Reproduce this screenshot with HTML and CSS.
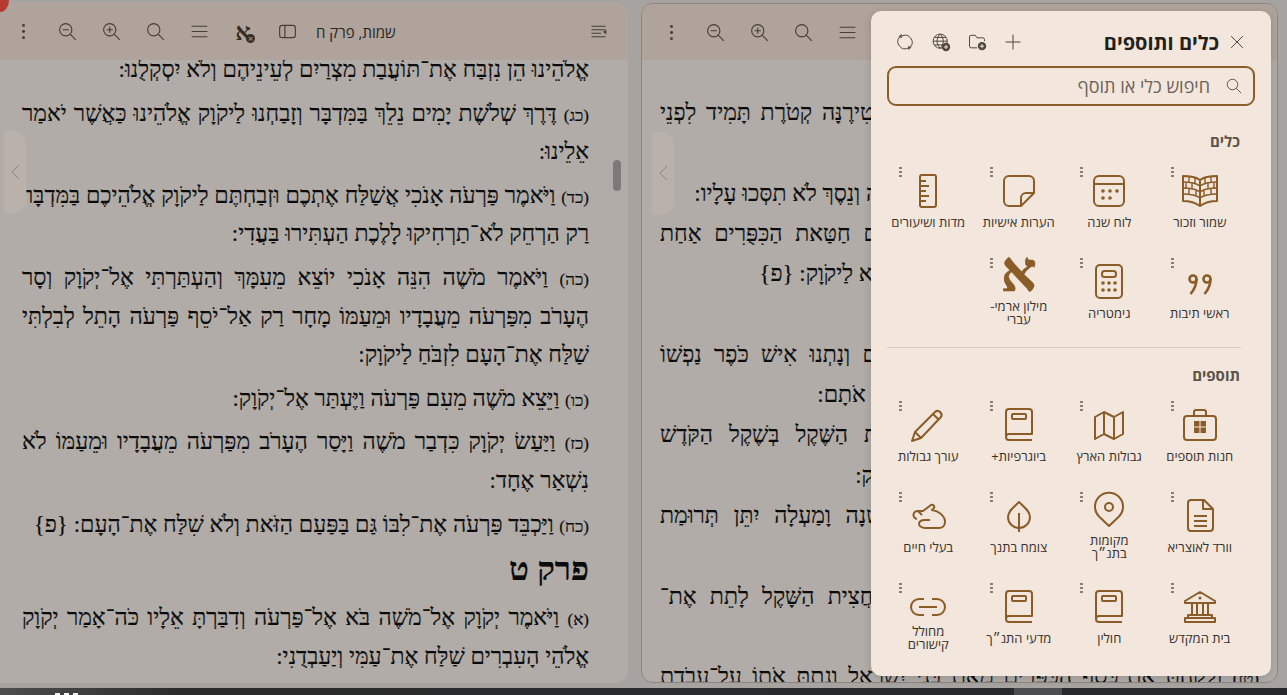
FILE: index.html
```html
<!DOCTYPE html>
<html lang="he" dir="rtl">
<head>
    <meta charset="UTF-8">
    <title>כלים ותוספים</title>
    <link rel="stylesheet" href="styles.css">
</head>
<body>
    <div class="panes">
        <section class="pane pane-framed">
            <header class="pane-head">
                <button class="head-btn"><svg class="head-icon" viewBox="0 0 24 24"><path d="M4 6h16M4 10h16M4 14h11M4 18h16"/><path class="solid" d="M21 10v5l-4-2.500z"/></svg></button>
                <div class="head-end">
                    <span class="pane-title">שמות, פרק ל</span>
                    <div class="head-tools">
                        <button class="head-btn"><svg class="head-icon" viewBox="0 0 24 24"><rect x="3" y="5" width="18" height="14" rx="3"/><path d="M9 5v14"/></svg></button>
                        <button class="head-btn"><span class="aleph-mark">א</span><span class="aleph-badge">×</span></button>
                        <button class="head-btn"><svg class="head-icon" viewBox="0 0 24 24"><path d="M3 6h18M3 12h18M3 18h18"/></svg></button>
                        <button class="head-btn"><svg class="head-icon" viewBox="0 0 24 24"><circle cx="10" cy="10" r="7"/><path d="M15 15l6.500 6.500"/></svg></button>
                        <button class="head-btn"><svg class="head-icon" viewBox="0 0 24 24"><circle cx="10" cy="10" r="7"/><path d="M15 15l6.500 6.500M6.500 10h7M10 6.500v7"/></svg></button>
                        <button class="head-btn"><svg class="head-icon" viewBox="0 0 24 24"><circle cx="10" cy="10" r="7"/><path d="M15 15l6.500 6.500M6.500 10h7"/></svg></button>
                        <button class="head-btn"><svg class="head-icon" viewBox="0 0 24 24"><circle class="solid" cx="12" cy="5" r="1.700"/><circle class="solid" cx="12" cy="12" r="1.700"/><circle class="solid" cx="12" cy="19" r="1.700"/></svg></button>
                    </div>
                </div>
            </header>
            <div class="reader reader-wide">
                <div class="row full"><small>(ח)</small> וּבְהַעֲלֹת אַהֲרֹן אֶת־הַנֵּרֹת בֵּין הָעַרְבַּיִם יַקְטִירֶנָּה קְטֹרֶת תָּמִיד לִפְנֵי</div>
                <div class="row">יְקֹוָק לְדֹרֹתֵיכֶם:</div>
                <div class="row push-l"><small>(ט)</small> לֹא־תַעֲלוּ עָלָיו קְטֹרֶת זָרָה וְעֹלָה וּמִנְחָה וְנֵסֶךְ לֹא תִסְּכוּ עָלָיו:</div>
                <div class="row full"><small>(י)</small> וְכִפֶּר אַהֲרֹן עַל־קַרְנֹתָיו אַחַת בַּשָּׁנָה מִדַּם חַטַּאת הַכִּפֻּרִים אַחַת</div>
                <div class="row push-s">בַּשָּׁנָה יְכַפֵּר עָלָיו לְדֹרֹתֵיכֶם קֹדֶשׁ־קָדָשִׁים הוּא לַיקֹוָק: {פ}</div>
                <div class="row"><small>(יא)</small> וַיְדַבֵּר יְקֹוָק אֶל־מֹשֶׁה לֵּאמֹר:</div>
                <div class="row full"><small>(יב)</small> כִּי תִשָּׂא אֶת־רֹאשׁ בְּנֵי־יִשְׂרָאֵל לִפְקֻדֵיהֶם וְנָתְנוּ אִישׁ כֹּפֶר נַפְשׁוֹ</div>
                <div class="row push-s">לַיקֹוָק בִּפְקֹד אֹתָם וְלֹא־יִהְיֶה בָהֶם נֶגֶף בִּפְקֹד אֹתָם:</div>
                <div class="row full"><small>(יג)</small> זֶה יִתְּנוּ כָּל־הָעֹבֵר עַל־הַפְּקֻדִים מַחֲצִית הַשֶּׁקֶל בְּשֶׁקֶל הַקֹּדֶשׁ</div>
                <div class="row">עֶשְׂרִים גֵּרָה הַשֶּׁקֶל מַחֲצִית הַשֶּׁקֶל תְּרוּמָה לַיקֹוָק:</div>
                <div class="row full"><small>(יד)</small> כֹּל הָעֹבֵר עַל־הַפְּקֻדִים מִבֶּן עֶשְׂרִים שָׁנָה וָמַעְלָה יִתֵּן תְּרוּמַת</div>
                <div class="row">יְקֹוָק:</div>
                <div class="row full"><small>(טו)</small> הֶעָשִׁיר לֹא־יַרְבֶּה וְהַדַּל לֹא יַמְעִיט מִמַּחֲצִית הַשָּׁקֶל לָתֵת אֶת־</div>
                <div class="row">תְּרוּמַת יְקֹוָק לְכַפֵּר עַל־נַפְשֹׁתֵיכֶם:</div>
                <div class="row full"><small>(טז)</small> וְלָקַחְתָּ אֶת־כֶּסֶף הַכִּפֻּרִים מֵאֵת בְּנֵי יִשְׂרָאֵל וְנָתַתָּ אֹתוֹ עַל־עֲבֹדַת</div>
            </div>
            <button class="edge-tab edge-tab-framed"><svg viewBox="0 0 12 20"><path d="M10 3L3 10l7 7"/></svg></button>
        </section>

        <section class="pane pane-open">
            <header class="pane-head">
                <button class="head-btn"><svg class="head-icon" viewBox="0 0 24 24"><path d="M4 6h16M4 10h16M4 14h11M4 18h16"/><path class="solid" d="M21 10v5l-4-2.500z"/></svg></button>
                <div class="head-end">
                    <span class="pane-title">שמות, פרק ח</span>
                    <div class="head-tools">
                        <button class="head-btn"><svg class="head-icon" viewBox="0 0 24 24"><rect x="3" y="5" width="18" height="14" rx="3"/><path d="M9 5v14"/></svg></button>
                        <button class="head-btn"><span class="aleph-mark">א</span><span class="aleph-badge">×</span></button>
                        <button class="head-btn"><svg class="head-icon" viewBox="0 0 24 24"><path d="M3 6h18M3 12h18M3 18h18"/></svg></button>
                        <button class="head-btn"><svg class="head-icon" viewBox="0 0 24 24"><circle cx="10" cy="10" r="7"/><path d="M15 15l6.500 6.500"/></svg></button>
                        <button class="head-btn"><svg class="head-icon" viewBox="0 0 24 24"><circle cx="10" cy="10" r="7"/><path d="M15 15l6.500 6.500M6.500 10h7M10 6.500v7"/></svg></button>
                        <button class="head-btn"><svg class="head-icon" viewBox="0 0 24 24"><circle cx="10" cy="10" r="7"/><path d="M15 15l6.500 6.500M6.500 10h7"/></svg></button>
                        <button class="head-btn"><svg class="head-icon" viewBox="0 0 24 24"><circle class="solid" cx="12" cy="5" r="1.700"/><circle class="solid" cx="12" cy="12" r="1.700"/><circle class="solid" cx="12" cy="19" r="1.700"/></svg></button>
                    </div>
                </div>
            </header>
            <div class="reader reader-narrow">
                <p><span class="row">אֱלֹהֵינוּ הֵן נִזְבַּח אֶת־תּוֹעֲבַת מִצְרַיִם לְעֵינֵיהֶם וְלֹא יִסְקְלֻנוּ:</span></p>
                <p><span class="row full"><small>(כג)</small> דֶּרֶךְ שְׁלֹשֶׁת יָמִים נֵלֵךְ בַּמִּדְבָּר וְזָבַחְנוּ לַיקֹוָק אֱלֹהֵינוּ כַּאֲשֶׁר יֹאמַר</span>
                <span class="row">אֵלֵינוּ:</span></p>
                <p><span class="row full"><small>(כד)</small> וַיֹּאמֶר פַּרְעֹה אָנֹכִי אֲשַׁלַּח אֶתְכֶם וּזְבַחְתֶּם לַיקֹוָק אֱלֹהֵיכֶם בַּמִּדְבָּר</span>
                <span class="row">רַק הַרְחֵק לֹא־תַרְחִיקוּ לָלֶכֶת הַעְתִּירוּ בַּעֲדִי:</span></p>
                <p><span class="row full"><small>(כה)</small> וַיֹּאמֶר מֹשֶׁה הִנֵּה אָנֹכִי יוֹצֵא מֵעִמָּךְ וְהַעְתַּרְתִּי אֶל־יְקֹוָק וְסָר</span>
                <span class="row full">הֶעָרֹב מִפַּרְעֹה מֵעֲבָדָיו וּמֵעַמּוֹ מָחָר רַק אַל־יֹסֵף פַּרְעֹה הָתֵל לְבִלְתִּי</span>
                <span class="row">שַׁלַּח אֶת־הָעָם לִזְבֹּחַ לַיקֹוָק:</span></p>
                <p><span class="row"><small>(כו)</small> וַיֵּצֵא מֹשֶׁה מֵעִם פַּרְעֹה וַיֶּעְתַּר אֶל־יְקֹוָק:</span></p>
                <p><span class="row full"><small>(כז)</small> וַיַּעַשׂ יְקֹוָק כִּדְבַר מֹשֶׁה וַיָּסַר הֶעָרֹב מִפַּרְעֹה מֵעֲבָדָיו וּמֵעַמּוֹ לֹא</span>
                <span class="row">נִשְׁאַר אֶחָד:</span></p>
                <p><span class="row"><small>(כח)</small> וַיַּכְבֵּד פַּרְעֹה אֶת־לִבּוֹ גַּם בַּפַּעַם הַזֹּאת וְלֹא שִׁלַּח אֶת־הָעָם: {פ}</span></p>
                <h2>פרק ט</h2>
                <p><span class="row full"><small>(א)</small> וַיֹּאמֶר יְקֹוָק אֶל־מֹשֶׁה בֹּא אֶל־פַּרְעֹה וְדִבַּרְתָּ אֵלָיו כֹּה־אָמַר יְקֹוָק</span>
                <span class="row">אֱלֹהֵי הָעִבְרִים שַׁלַּח אֶת־עַמִּי וְיַעַבְדֻנִי:</span></p>
            </div>
            <div class="scroll-thumb"></div>
            <button class="edge-tab edge-tab-open"><svg viewBox="0 0 12 20"><path d="M10 3L3 10l7 7"/></svg></button>
        </section>
    </div>

    <footer class="taskbar">
        <div class="tray"><i></i><i></i><i></i></div>
        <div class="task-active"></div>
    </footer>

    <div class="scrim"></div>
    <div class="corner-dot"></div>

    <aside class="tools-panel">
        <div class="panel-head">
            <button class="panel-btn"><svg class="panel-icon" viewBox="0 0 24 24"><path d="M5 5l14 14M19 5L5 19"/></svg></button>
            <h1>כלים ותוספים</h1>
            <div class="panel-actions">
                <button class="panel-btn"><svg class="panel-icon" viewBox="0 0 24 24"><path d="M12 3v18M3 12h18"/></svg></button>
                <button class="panel-btn"><svg class="panel-icon" viewBox="0 0 24 24"><path d="M3 17V6a2 2 0 0 1 2-2h5l2 3h7a2 2 0 0 1 2 2v2M3 17a2 2 0 0 0 2 2h7"/><circle class="solid" cx="18" cy="17" r="5"/><path class="knock" d="M18 14.500v5M15.500 17h5"/></svg></button>
                <button class="panel-btn"><svg class="panel-icon" viewBox="0 0 24 24"><circle cx="11" cy="11" r="8.500"/><path d="M2.500 11h17M11 2.500c-5 5-5 12 0 17M11 2.500c5 5 5 12 0 17M4 6.500h14M4 15.500h10"/><circle class="solid" cx="18" cy="18" r="5"/><path class="knock" d="M18 15.500v5M15.500 18h5"/></svg></button>
                <button class="panel-btn"><svg class="panel-icon" viewBox="0 0 24 24"><path d="M8 5a8.500 8.500 0 0 1 10.500 13M16 19a8.500 8.500 0 0 1-10.500-13"/><path class="solid" d="M8 2v5.500l-3.500-2zM16 22v-5.500l3.500 2z"/></svg></button>
            </div>
        </div>

        <label class="search">
            <svg class="panel-icon" viewBox="0 0 24 24"><circle cx="10" cy="10" r="7"/><path d="M15 15l6.500 6.500"/></svg>
            <input type="text" placeholder="חיפוש כלי או תוסף">
        </label>

        <h3 class="group-title">כלים</h3>
        <div class="tool-grid">
            <div class="tool"><span class="kebab"></span>
                <svg class="tool-icon" viewBox="0 0 36 36"><path d="M18 7C14 4 8 3 1 3v25c7 0 13 2 17 5 4-3 10-5 17-5V3c-7 0-13 1-17 4zM18 7v26"/><path class="thin" d="M1 9c7 0 13 1 17 4 4-3 10-4 17-4M1 15c7 0 13 1 17 4 4-3 10-4 17-4M1 21c7 0 13 1 17 4 4-3 10-4 17-4M7 3.500v6M13 4.500v6M4 10v6M10 10.500v6M7 16v6M14 17v6M29 3.500v6M23 4.500v6M32 10v6M26 10.500v6M29 16v6M22 17v6"/></svg>
                <span class="tool-name">שמור וזכור</span></div>
            <div class="tool"><span class="kebab"></span>
                <svg class="tool-icon" viewBox="0 0 36 36"><rect x="3" y="3" width="30" height="30" rx="5"/><path d="M3 11h30"/><circle class="solid" cx="12" cy="18" r="1.800"/><circle class="solid" cx="19" cy="18" r="1.800"/><circle class="solid" cx="26" cy="18" r="1.800"/><circle class="solid" cx="12" cy="25" r="1.800"/><circle class="solid" cx="19" cy="25" r="1.800"/></svg>
                <span class="tool-name">לוח שנה</span></div>
            <div class="tool"><span class="kebab"></span>
                <svg class="tool-icon" viewBox="0 0 36 36"><path d="M8 3h20a5 5 0 0 1 5 5v12L20 33H8a5 5 0 0 1-5-5V8a5 5 0 0 1 5-5z"/><path d="M33 20h-8a5 5 0 0 0-5 5v8"/></svg>
                <span class="tool-name">הערות אישיות</span></div>
            <div class="tool"><span class="kebab"></span>
                <svg class="tool-icon" viewBox="0 0 36 36"><rect x="10" y="2" width="16" height="32" rx="2"/><path d="M10 8h6M10 13h9M10 18h6M10 23h9M10 28h6"/></svg>
                <span class="tool-name">מדות ושיעורים</span></div>
            <div class="tool"><span class="kebab"></span>
                <svg class="tool-icon icon-heavy" viewBox="0 0 36 36"><circle cx="11" cy="15" r="3.500"/><circle cx="25" cy="15" r="3.500"/><path d="M14.500 15c0 6-2.500 11-6 15M28.500 15c0 6-2.500 11-6 15"/></svg>
                <span class="tool-name">ראשי תיבות</span></div>
            <div class="tool"><span class="kebab"></span>
                <svg class="tool-icon" viewBox="0 0 36 36"><rect x="5" y="1" width="26" height="33" rx="4"/><rect x="11" y="7" width="14" height="6" rx="2.500"/><circle class="solid" cx="12" cy="19" r="1.800"/><circle class="solid" cx="18" cy="19" r="1.800"/><circle class="solid" cx="24" cy="19" r="1.800"/><circle class="solid" cx="12" cy="26" r="1.800"/><circle class="solid" cx="18" cy="26" r="1.800"/><circle class="solid" cx="24" cy="26" r="1.800"/></svg>
                <span class="tool-name">גימטריה</span></div>
            <div class="tool"><span class="kebab"></span>
                <span class="tool-glyph">א</span>
                <span class="tool-name">מילון ארמי-<br>עברי</span></div>
        </div>

        <hr>

        <h3 class="group-title">תוספים</h3>
        <div class="tool-grid">
            <div class="tool"><span class="kebab"></span>
                <svg class="tool-icon" viewBox="0 0 36 36"><rect x="2" y="9" width="32" height="24" rx="3"/><path d="M12 9V5a2 2 0 0 1 2-2h8a2 2 0 0 1 2 2v4"/><path class="solid" d="M12 14h5.500v5.500H12zM18.500 14H24v5.500h-5.500zM12 20.500h5.500V26H12zM18.500 20.500H24V26h-5.500z"/></svg>
                <span class="tool-name">חנות תוספים</span></div>
            <div class="tool"><span class="kebab"></span>
                <svg class="tool-icon" viewBox="0 0 36 36"><path d="M4 10l9-5 10 5 9-5v22l-9 5-10-5-9 5zM13 5v22M23 10v22"/></svg>
                <span class="tool-name">גבולות הארץ</span></div>
            <div class="tool"><span class="kebab"></span>
                <svg class="tool-icon" viewBox="0 0 36 36"><path d="M5 30a3 3 0 0 1 3-3h23V5a3 3 0 0 0-3-3H8a3 3 0 0 0-3 3zM5 30a3 3 0 0 0 3 3h23"/><rect x="11" y="7" width="14" height="5" rx="1"/></svg>
                <span class="tool-name">ביוגרפיות+</span></div>
            <div class="tool"><span class="kebab"></span>
                <svg class="tool-icon" viewBox="0 0 36 36"><path d="M2 34l3-9L25 5a3.900 3.900 0 0 1 5.500 5.500L11 31zM5 25l6 6M23 7l5.500 5.500"/></svg>
                <span class="tool-name">עורך גבולות</span></div>
            <div class="tool"><span class="kebab"></span>
                <svg class="tool-icon" viewBox="0 0 36 36"><path d="M9 2h13l9 9v19a3 3 0 0 1-3 3H9a3 3 0 0 1-3-3V5a3 3 0 0 1 3-3z"/><path d="M21 2v9h10M12 18h13M12 23h13M12 28h13"/></svg>
                <span class="tool-name">וורד לאוצריא</span></div>
            <div class="tool"><span class="kebab"></span>
                <svg class="tool-icon icon-spill" viewBox="0 0 36 36"><path d="M18 28L8 18.500a14 14 0 1 1 20 0z"/><circle cx="18" cy="9" r="4"/></svg>
                <span class="tool-name">מקומות<br>בתנ״ך</span></div>
            <div class="tool"><span class="kebab"></span>
                <svg class="tool-icon" viewBox="0 0 36 36"><path d="M18 4c-5 5-11 9-11 15a11 11 0 0 0 22 0C29 13 23 9 18 4zM18 15v19"/></svg>
                <span class="tool-name">צומח בתנך</span></div>
            <div class="tool"><span class="kebab"></span>
                <svg class="tool-icon" viewBox="0 0 36 36"><path d="M7 21a4 4 0 1 1 1-8h5l8-6c2-1 4 1 3 3l-2 2c7 1 13 6 13 12 0 4-3 6-6 6H15c-3 0-6-2-6-4 0-3 3-4 6-4h5"/><path d="M8 13l4 4"/></svg>
                <span class="tool-name">בעלי חיים</span></div>
            <div class="tool"><span class="kebab"></span>
                <svg class="tool-icon" viewBox="0 0 36 36"><path d="M18 3l15 9v2H3v-2zM6 29v-3h24v3M3 33v-4h30v4zM10 14v12M15 14v12M21 14v12M26 14v12"/><circle class="solid" cx="18" cy="9" r="1.500"/></svg>
                <span class="tool-name">בית המקדש</span></div>
            <div class="tool"><span class="kebab"></span>
                <svg class="tool-icon" viewBox="0 0 36 36"><path d="M5 30a3 3 0 0 1 3-3h23V5a3 3 0 0 0-3-3H8a3 3 0 0 0-3 3zM5 30a3 3 0 0 0 3 3h23"/><rect x="11" y="7" width="14" height="5" rx="1"/></svg>
                <span class="tool-name">חולין</span></div>
            <div class="tool"><span class="kebab"></span>
                <svg class="tool-icon" viewBox="0 0 36 36"><path d="M5 30a3 3 0 0 1 3-3h23V5a3 3 0 0 0-3-3H8a3 3 0 0 0-3 3zM5 30a3 3 0 0 0 3 3h23"/><rect x="11" y="7" width="14" height="5" rx="1"/></svg>
                <span class="tool-name">מדעי התנ״ך</span></div>
            <div class="tool"><span class="kebab"></span>
                <svg class="tool-icon" viewBox="0 0 36 36"><path d="M14 10H9a8 8 0 0 0 0 16h5M22 10h5a8 8 0 0 1 0 16h-5M9 18h18"/></svg>
                <span class="tool-name">מחולל<br>קישורים</span></div>
        </div>
    </aside>
</body>
</html>
```

FILE: styles.css
```css
* {
    box-sizing: border-box;
}

body {
    margin: 0;
    height: 695px;
    overflow: hidden;
    background: #eeeae6;
    font-family: "Open Sans", "Liberation Sans", sans-serif;
}

button {
    border: 0;
    padding: 0;
    background: none;
    font: inherit;
    color: inherit;
}

/* reader panes */
.panes {
    display: flex;
    gap: 13px;
    height: 688px;
    padding: 3px 9px 5px 0;
}

.pane {
    position: relative;
    display: flex;
    flex-direction: column;
    overflow: hidden;
    background: #fef7f1;
}

.pane-framed {
    width: 637px;
    border: 1px solid #c9bfb6;
    border-radius: 12px;
}

.pane-open {
    width: 628px;
    border-radius: 0 12px 12px 0;
}

.pane-head {
    position: relative;
    z-index: 1;
    display: flex;
    justify-content: space-between;
    align-items: center;
    flex: none;
    height: 57px;
    padding: 0 8px 0 1px;
    background: #fbeade;
}

.pane-framed .pane-head {
    padding-left: 7px;
    height: 56px;
}

.head-end,
.head-tools {
    display: flex;
    align-items: center;
}

.head-end {
    gap: 7px;
}

.pane-title {
    font-size: 15px;
    color: #3a3632;
}

.head-btn {
    position: relative;
    display: flex;
    align-items: center;
    justify-content: center;
    width: 44px;
    height: 44px;
}

.head-icon {
    width: 21px;
    height: 21px;
    fill: none;
    stroke: #66594f;
    stroke-width: 1.300;
}

.head-icon .solid {
    fill: #66594f;
    stroke: none;
}

.aleph-mark {
    font: bold 24px/1 "Liberation Serif", serif;
    color: #4d4238;
}

.aleph-badge {
    position: absolute;
    left: 25px;
    top: 24px;
    width: 9px;
    height: 9px;
    border-radius: 50%;
    font-size: 9px;
    line-height: 9px;
    text-align: center;
    color: #fbeade;
    background: #4d4238;
}

.reader {
    font-family: "Liberation Serif", serif;
    font-size: 23px;
    color: #111;
    -webkit-text-stroke: .2px #111;
}

.reader small {
    font-size: 17px;
    line-height: 1;
}

.reader-narrow {
    margin-top: -9px;
    padding: 0 39px 0 22px;
    line-height: 38.600px;
}

.reader-narrow p {
    margin: 0 0 5px;
}

.reader-narrow h2 {
    margin: 5px 0 10px;
    font-size: 33px;
    line-height: 40px;
}

.reader-wide {
    padding: 33px 18px 0 18px;
    line-height: 40.300px;
}

.row {
    display: block;
    white-space: nowrap;
}

.row.full {
    white-space: normal;
    text-align: justify;
    text-align-last: justify;
}

/* verse endings sit further along than the browser's font would put them */
.push-s {
    padding-right: 27px;
}

.push-l {
    padding-right: 45px;
}

.scroll-thumb {
    position: absolute;
    left: 613px;
    top: 157px;
    width: 8px;
    height: 31px;
    border-radius: 4px;
    background: #b5aea9;
}

.edge-tab {
    position: absolute;
    z-index: 3;
    top: 128px;
    display: flex;
    align-items: center;
    justify-content: center;
    width: 22px;
    height: 82px;
    border-radius: 0 14px 14px 0;
    background: #bab1aa;
    box-shadow: 0 0 3px #bab1aa;
}

.edge-tab-open {
    left: 4px;
}

.edge-tab-framed {
    left: 10px;
}

.edge-tab svg {
    width: 12px;
    height: 20px;
    fill: none;
    stroke: #8a847e;
    stroke-width: 1;
}

/* desktop strip along the bottom */
.taskbar {
    position: relative;
    height: 7px;
    overflow: hidden;
    background: linear-gradient(to right, #4d4d4d, #2b2b2b 180px, #26282b);
}

.task-active {
    position: absolute;
    left: 1014px;
    top: 0;
    width: 48px;
    height: 7px;
    background: #4b4d50;
}

.tray {
    position: absolute;
    left: 55px;
    top: 5px;
    display: flex;
    gap: 4px;
}

.tray i {
    width: 5px;
    height: 2px;
    background: #f5f5f5;
}

.scrim {
    position: absolute;
    z-index: 2;
    top: 0;
    left: 0;
    right: 0;
    height: 688px;
    background: rgba(0, 0, 0, .3);
}

.corner-dot {
    position: absolute;
    z-index: 3;
    left: 0;
    top: 0;
    width: 9px;
    height: 12px;
    border-radius: 0 0 100% 0;
    background: #b8392f;
}

/* tools panel */
.tools-panel {
    position: absolute;
    z-index: 4;
    left: 871px;
    top: 11px;
    width: 400px;
    height: 665px;
    padding: 13px 16px 0;
    border-radius: 10px;
    background: #f3e6dc;
    box-shadow: 0 2px 8px rgba(0, 0, 0, .15);
}

.panel-head {
    display: flex;
    align-items: center;
    height: 36px;
}

.panel-head h1 {
    margin: 0;
    font-size: 20px;
    font-weight: 700;
    color: #231f1b;
}

.panel-actions {
    display: flex;
    margin-right: auto;
}

.panel-btn {
    display: flex;
    align-items: center;
    justify-content: center;
    width: 36px;
    height: 36px;
}

.panel-icon {
    width: 20px;
    height: 20px;
    fill: none;
    stroke: #50473f;
    stroke-width: 1.200;
}

.panel-icon .solid {
    fill: #50473f;
    stroke: none;
}

.panel-icon .knock {
    stroke: #f3e6dc;
}

.search {
    display: flex;
    align-items: center;
    gap: 15px;
    height: 40px;
    margin-top: 6px;
    padding: 0 10px;
    border: 2px solid #8a5f2d;
    border-radius: 9px;
}

.search .panel-icon {
    flex: none;
    width: 18px;
    height: 18px;
}

.search input {
    flex: 1;
    min-width: 0;
    padding: 0;
    border: 0;
    outline: 0;
    background: none;
    font: 18px "Open Sans", sans-serif;
}

.search input::placeholder {
    color: #6d6359;
    opacity: 1;
}

.group-title {
    margin: 25px 15px 14px 0;
    font-size: 15px;
    line-height: 20px;
    font-weight: 700;
    color: #5b524a;
}

.tools-panel hr {
    height: 1px;
    margin: 0 14px 0 0;
    border: 0;
    background: #d8ccc2;
}

hr + .group-title {
    margin-top: 17px;
}

.tool-grid {
    display: grid;
    grid-template-columns: repeat(4, 90.500px);
    grid-auto-rows: 91px;
    margin-right: -6px;
    padding-right: 16px;
}

.tool {
    position: relative;
    display: flex;
    flex-direction: column;
    align-items: center;
    padding-top: 8px;
}

.tool-icon {
    flex: none;
    width: 36px;
    height: 36px;
    fill: none;
    stroke: #8a5c28;
    stroke-width: 2;
    stroke-linejoin: round;
}

.tool-icon .thin {
    stroke-width: 1.400;
}

.tool-icon .solid {
    fill: #8a5c28;
    stroke: none;
}

.icon-heavy {
    stroke-width: 2.600;
}

.icon-spill {
    overflow: visible;
}

.tool-glyph {
    flex: none;
    height: 36px;
    font: 900 56px/14px "DejaVu Serif", serif;
    color: #8a5c28;
    -webkit-text-stroke: .6px #8a5c28;
}

.tool-name {
    display: flex;
    align-items: center;
    height: 26px;
    text-align: center;
    white-space: nowrap;
    font-size: 13px;
    line-height: 13px;
    color: #37312b;
}

.kebab {
    position: absolute;
    left: 16px;
    top: 1px;
    width: 3px;
    height: 12px;
    background: radial-gradient(circle, #857a6f 1.100px, transparent 1.400px) 0 0 / 3px 4px;
}
```
